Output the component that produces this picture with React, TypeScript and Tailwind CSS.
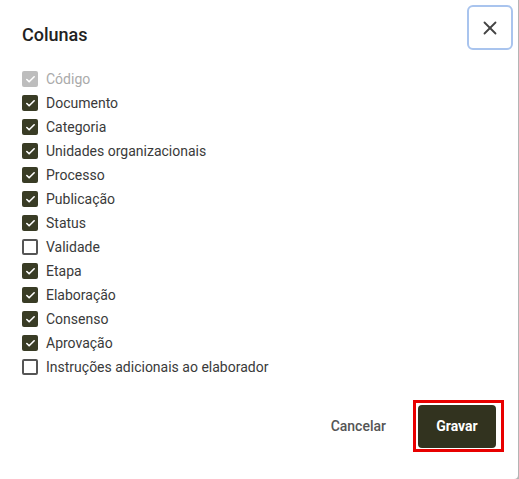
import React, { useState } from "react";
import { X, Check } from "lucide-react";

const columns = [
  { label: "Código", checked: true, disabled: true },
  { label: "Documento", checked: true },
  { label: "Categoria", checked: true },
  { label: "Unidades organizacionais", checked: true },
  { label: "Processo", checked: true },
  { label: "Publicação", checked: true },
  { label: "Status", checked: true },
  { label: "Validade", checked: false },
  { label: "Etapa", checked: true },
  { label: "Elaboração", checked: true },
  { label: "Consenso", checked: true },
  { label: "Aprovação", checked: true },
  { label: "Instruções adicionais ao elaborador", checked: false },
];

export default function App() {
  const [items, setItems] = useState(columns);

  const toggle = (i: number) => {
    setItems((prev) =>
      prev.map((c, idx) =>
        idx === i && !c.disabled ? { ...c, checked: !c.checked } : c
      )
    );
  };

  return (
    <div
      className="w-[519px] h-[479px] bg-[#b4b4b4] overflow-hidden"
      style={{ fontFamily: "Roboto, 'Liberation Sans', sans-serif" }}
    >
      <div className="w-[518px] h-[479px] bg-white rounded-br-[4px] flex flex-col">
        <div className="flex items-start justify-between">
          <h2 className="mt-[24px] ml-[22px] text-[18px] leading-[22px] font-medium text-[#222]">
            Colunas
          </h2>
          <button className="mt-[5px] mr-[5px] w-[46px] h-[45px] rounded-[6px] border-[2.5px] border-[#a9c4ee] flex items-center justify-center text-[#444]">
            <X size={22} strokeWidth={2} />
          </button>
        </div>

        <ul className="mt-[17px] ml-[22px]">
          {items.map((c, i) => (
            <li
              key={c.label}
              className="h-[24px] flex items-center gap-[8px] cursor-pointer"
              onClick={() => toggle(i)}
            >
              <span
                className={
                  c.checked
                    ? c.disabled
                      ? "w-[16px] h-[16px] rounded-[2px] bg-[#bdbdbd] flex items-center justify-center text-white"
                      : "w-[16px] h-[16px] rounded-[2px] bg-[#393c25] flex items-center justify-center text-white"
                    : "w-[16px] h-[16px] rounded-[2px] border-2 border-[#555]"
                }
              >
                {c.checked && <Check size={11} strokeWidth={3.5} />}
              </span>
              <span
                className={
                  c.disabled
                    ? "text-[14px] text-[#aaa]"
                    : "text-[14px] text-[#3a3a3a]"
                }
              >
                {c.label}
              </span>
            </li>
          ))}
        </ul>

        <div className="mt-[21px] mr-[14px] flex items-center justify-end gap-[27px]">
          <button className="text-[14px] font-medium text-[#555]">Cancelar</button>
          <div className="border-[3px] border-[#e80000] pt-[2px] pl-[2px] pr-[5px] pb-[1px]">
            <button className="w-[78px] h-[43px] rounded-[4px] bg-[#32331f] text-white text-[14px] font-bold">
              Gravar
            </button>
          </div>
        </div>
      </div>
    </div>
  );
}
